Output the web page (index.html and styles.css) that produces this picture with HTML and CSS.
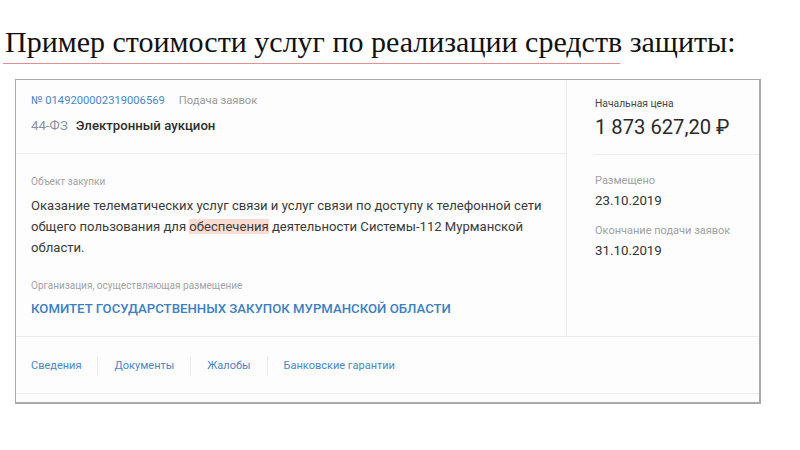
FILE: index.html
```html
<!DOCTYPE html>
<html lang="ru">
<head>
<meta charset="utf-8">
<link rel="stylesheet" href="styles.css">
</head>
<body>
<h1 class="title">Пример стоимости услуг по реализации средств защиты:</h1>
<div class="title-rule"></div>
<div class="card">
  <div class="main">
    <div class="left">
      <div class="head">
        <div class="line1"><span class="num">№ 0149200002319006569</span><span class="stage">Подача заявок</span></div>
        <div class="line2"><span class="law">44-ФЗ</span><span class="kind">Электронный аукцион</span></div>
      </div>
      <div class="body">
        <div class="label">Объект закупки</div>
        <p class="desc">Оказание телематических услуг связи и услуг связи по доступу к телефонной сети общего пользования для <span class="hl">обеспечения</span> деятельности Системы-112 Мурманской области.</p>
        <div class="label org-label">Организация, осуществляющая размещение</div>
        <div class="org">КОМИТЕТ ГОСУДАРСТВЕННЫХ ЗАКУПОК МУРМАНСКОЙ ОБЛАСТИ</div>
      </div>
    </div>
    <div class="right">
      <div class="price-block">
        <div class="small dark">Начальная цена</div>
        <div class="price">1 873 627,20 ₽</div>
      </div>
      <div class="dates">
        <div class="small">Размещено</div>
        <div class="date">23.10.2019</div>
        <div class="small gap">Окончание подачи заявок</div>
        <div class="date">31.10.2019</div>
      </div>
    </div>
  </div>
  <div class="tabs">
    <span class="tab">Сведения</span>
    <span class="sep"></span>
    <span class="tab">Документы</span>
    <span class="sep"></span>
    <span class="tab">Жалобы</span>
    <span class="sep"></span>
    <span class="tab">Банковские гарантии</span>
  </div>
  <div class="strip"></div>
</div>
</body>
</html>
```
FILE: styles.css
```css
* { box-sizing: border-box; }
html, body { margin: 0; padding: 0; background: #fff; }
body { width: 800px; height: 450px; overflow: hidden; font-family: Roboto, "Noto Sans", sans-serif; }

.title {
  margin: 0;
  padding: 25px 0 0 5px;
  font-family: "Liberation Serif", "Times New Roman", serif;
  font-weight: normal;
  font-size: 30px;
  line-height: 34px;
  color: #111;
}
.title-rule {
  margin: 4px 0 0 3px;
  width: 617px;
  height: 1px;
  background: #e29090;
}

.card {
  margin: 15px 0 0 15px;
  width: 746px;
  height: 325px;
  border: 1px solid #a9a9a9;
  border-right-width: 2px;
  border-bottom-width: 2px;
  background: #fdfdfd;
  display: flex;
  flex-direction: column;
}
.main {
  height: 257px;
  display: flex;
  border-bottom: 1px solid #ececec;
}
.left {
  width: 551px;
  border-right: 1px solid #ececec;
  display: flex;
  flex-direction: column;
}
.head {
  height: 74px;
  border-bottom: 1px solid #ececec;
  padding: 14px 0 0 15px;
}
.line1 { font-size: 11.2px; line-height: 14px; }
.num { color: #4a86c8; }
.stage { color: #9a9a9a; margin-left: 14px; }
.line2 { margin-top: 10px; font-size: 13.2px; line-height: 16px; }
.law { color: #8a93a3; font-size: 13.3px; }
.kind { color: #2e2e2e; font-weight: 500; margin-left: 8px; }

.body { padding: 21px 0 0 15px; }
.label { font-size: 10px; line-height: 13px; color: #a3a3a3; }
.desc {
  margin: 7px 0 0;
  font-size: 13.1px;
  line-height: 21px;
  color: #3a3a3a;
  width: 526px;
}
.hl { background: #fbdcd2; }
.org-label { margin-top: 21px; }
.org {
  margin-top: 9px;
  font-size: 13.2px;
  line-height: 16px;
  font-weight: 500;
  color: #3b7fc4;
}

.right { flex: 1; padding: 0 0 0 28px; }
.price-block {
  height: 75px;
  border-bottom: 1px solid #ececec;
  padding-top: 17px;
}
.small { font-size: 11px; line-height: 14px; color: #a0a0a0; }
.small.dark { color: #444; font-size: 10.3px; }
.price { font-size: 20.2px; line-height: 24px; color: #2a2a2a; margin-top: 4px; }
.dates { padding-top: 19px; }
.date { font-size: 13.3px; line-height: 16px; color: #333; margin-top: 5px; }
.gap { margin-top: 15px; }

.tabs {
  height: 57px;
  border-bottom: 1px solid #ececec;
  display: flex;
  align-items: center;
  padding: 1px 0 0 15px;
  font-size: 11px;
  color: #4a86c8;
}
.sep {
  width: 1px;
  height: 20px;
  background: #ececec;
  margin: 0 16px;
}
.strip { flex: 1; }
```
